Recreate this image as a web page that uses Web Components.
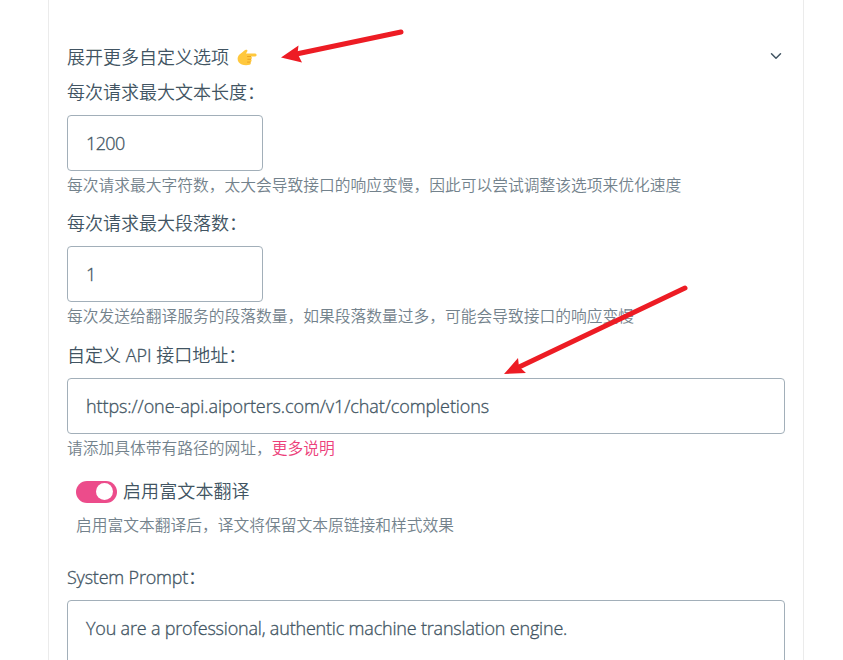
<!DOCTYPE html>
<html lang="zh-CN">
<head>
<meta charset="utf-8">
<title>翻译服务设置</title>
<style>
html,body{margin:0;height:660px;overflow:hidden;background:#fff}
body{font-family:"Open Sans","Noto Sans CJK SC",sans-serif;font-weight:350;color:#415462}
</style>
</head>
<body>
<settings-page></settings-page>
<script>
const define=(name,html)=>{
  const t=document.createElement('template');t.innerHTML=html;
  customElements.define(name,class extends HTMLElement{
    constructor(){super();this.attachShadow({mode:'open'}).append(t.content.cloneNode(true));}
  });
};
define('text-label',`<style>:host{display:block;font-size:18px;line-height:27px;white-space:nowrap}</style><slot></slot>`);
define('text-hint',`<style>:host{display:block;font-size:15.76px;line-height:28px;height:28px;color:#73828c;white-space:nowrap}::slotted(a){color:#ec407a;text-decoration:none}</style><slot></slot>`);
define('text-box',`<style>:host{display:block;box-sizing:border-box;height:56px;border:1px solid #a2afb9;border-radius:4px;padding:14px 18px 0;font-size:18px;line-height:27px;white-space:nowrap;background:#fff;-webkit-text-stroke:.3px #415462}</style><slot></slot>`);
define('form-field',`<style>:host{display:block}.l{height:36px}</style><div class="l"><text-label><slot name="label"></slot></text-label></div><slot></slot>`);
define('toggle-switch',`<style>:host{display:flex;box-sizing:border-box;width:41px;height:22px;padding:0 4px;border-radius:11px;background:#ec4c8b;justify-content:flex-end;align-items:center}i{width:17px;height:17px;border-radius:50%;background:#fff}</style><i></i>`);
define('hand-icon',`<style>:host{display:block;width:20px;height:18px}svg{display:block}</style>
<svg width="20" height="18" viewBox="0 0 20 18"><path fill="#ffc83d" d="M8.8.8c1.300-.5 2 .6 1.400 1.700L9 4.500h9.200c1.800 0 1.900 2.900 0 2.900h-4.600c1.700.2 1.700 2.600.2 2.900 1.200.5 1 2.600-.4 2.900.8.8.4 2.300-.8 2.500-2 .6-5.600.6-7.800-.2C2.200 14.600.6 12.500.6 9.800c0-2.400 1.200-4 3.200-5.300C5.600 3.300 6.800 1.600 8.800.8z"/><path fill="none" stroke="#e59a1c" stroke-width=".8" stroke-linecap="round" d="M10.500 7.500h3.200M10.800 10.300h3M10.500 13.100h2.800"/></svg>`);
define('chevron-icon',`<style>:host{display:block;width:18px;height:18px}svg{display:block}</style><svg width="18" height="18" viewBox="0 0 24 24" fill="none" stroke="#415462" stroke-width="2" stroke-linecap="round" stroke-linejoin="round"><path d="M6 9l6 6 6-6"/></svg>`);
define('arrow-overlay',`<style>:host{position:absolute;inset:0;pointer-events:none}svg{display:block}</style>
<svg width="843" height="660" fill="#ed1c24" stroke="#ed1c24"><path stroke-width="5" stroke-linecap="round" d="M401 32L294 54.500M685 288L517 368"/><path stroke="none" d="M281 57.500L298.500 45.500 297.500 53.500 302 62.500ZM504 374L518 358 519 366.500 526 373Z"/></svg>`);
define('settings-page',`<style>
:host{display:block;position:relative;height:660px;overflow:hidden}
main{box-sizing:border-box;width:756px;height:660px;margin-left:48px;border:solid #ebebeb;border-width:0 1px;padding:43px 18px 0;display:flex;flex-direction:column}
main>*{flex-shrink:0}
.head{display:flex;align-items:center;height:28px;margin-bottom:8px}
.head text-label{padding-top:1px}
.head hand-icon{margin:1px 0 0 8px}.head chevron-icon{margin:-3px 0 0 auto}
.small{width:196px}
.toggle{display:flex;align-items:center;gap:6px;height:27px;margin:16px 0 0 9px}
.toggle text-label{letter-spacing:.1px}
.th{margin:6px 0 0 9px}
.latin{-webkit-text-stroke:.3px #415462}
</style>
<main>
<div class="head"><text-label>展开更多自定义选项</text-label><hand-icon role="img" aria-label="👉"></hand-icon><chevron-icon></chevron-icon></div>
<form-field><span slot="label">每次请求最大文本长度：</span><text-box class="small"><span style="letter-spacing:-.6px">1200</span></text-box><text-hint>每次请求最大字符数，太大会导致接口的响应变慢，因此可以尝试调整该选项来优化速度</text-hint></form-field>
<form-field style="margin-top:11px"><span slot="label">每次请求最大段落数：</span><text-box class="small">1</text-box><text-hint>每次发送给翻译服务的段落数量，如果段落数量过多，可能会导致接口的响应变慢</text-hint></form-field>
<form-field style="margin-top:12px"><span slot="label">自定义 <span class="latin">API</span> 接口地址：</span><text-box><span style="letter-spacing:-.085px">https://one-api.aiporters.com/v1/chat/completions</span></text-box><text-hint>请添加具体带有路径的网址，<a href="#">更多说明</a></text-hint></form-field>
<div class="toggle"><toggle-switch></toggle-switch><text-label>启用富文本翻译</text-label></div>
<text-hint class="th">启用富文本翻译后，译文将保留文本原链接和样式效果</text-hint>
<form-field style="margin-top:25px"><span slot="label"><span class="latin" style="letter-spacing:-.2px">System Prompt</span>：</span><text-box style="height:120px"><span style="letter-spacing:-.19px">You are a professional, authentic machine translation engine.</span></text-box></form-field>
</main>
<arrow-overlay></arrow-overlay>`);
</script>
</body>
</html>
